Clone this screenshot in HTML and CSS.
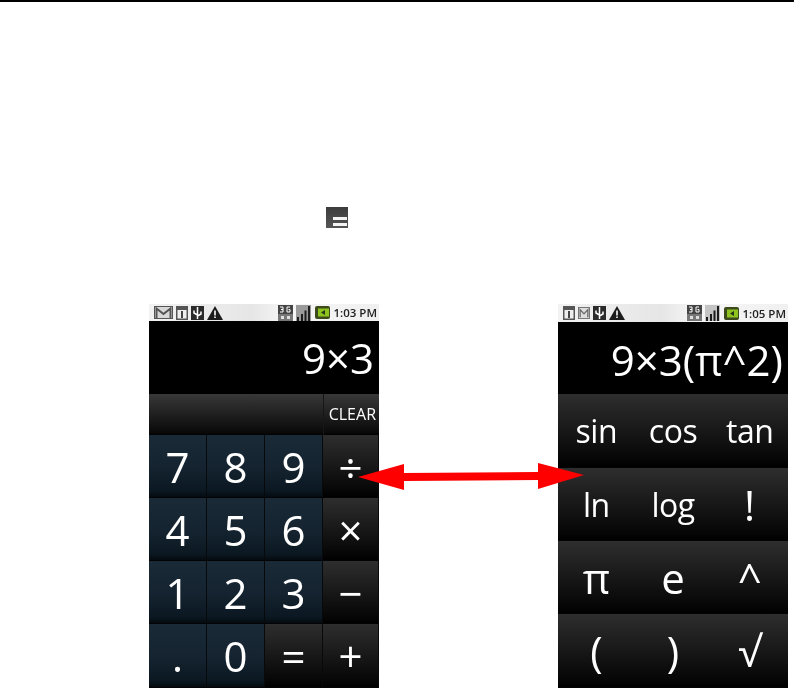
FILE: index.html
```html
<!DOCTYPE html>
<html lang="en">
<head>
    <meta charset="UTF-8">
    <meta name="viewport" content="width=device-width, initial-scale=1.0">
    <title>Calculator panels</title>
    <link rel="stylesheet" href="styles.css">
</head>
<body>
    <div class="top-rule"></div>

    <div class="menu-icon"><span></span><span></span></div>

    <div class="shots">
        <div class="phone">
            <div class="status">
                <div class="status-icons">
                    <svg class="ico ico-mail" viewBox="0 0 19 13"><rect x=".5" y=".5" width="18" height="12" fill="#d8d8d8" stroke="#555"/><path d="M2.500 12V2.500l7 5.500 7-5.500V12" fill="none" stroke="#555" stroke-width="2"/></svg>
                    <svg class="ico ico-cal" viewBox="0 0 12 14"><rect width="12" height="14" fill="#555"/><rect x="1.500" y="4" width="9" height="8.500" fill="#eee"/><path d="M5 5h2v7H5z" fill="#444"/></svg>
                    <svg class="ico ico-usb" viewBox="0 0 13 14"><rect width="13" height="14" fill="#2b2b2b"/><path d="M6.500 1v12M6.500 9 3 7V4.500M6.500 10 10 8V5.500" fill="none" stroke="#fff" stroke-width="1.500"/></svg>
                    <svg class="ico ico-warn" viewBox="0 0 16 14"><path d="M8 0 16 14H0z" fill="#1c1c1c"/><path d="M7.200 4.500h1.600v5H7.200zM7.200 10.500h1.600V12H7.200z" fill="#fff"/></svg>
                </div>
                <div class="status-icons">
                    <svg class="ico ico-net" viewBox="0 0 15 16"><rect width="15" height="9" fill="#444"/><rect y="9" width="15" height="7" fill="#777"/><path d="M2 2h3v5H2M5 4.500H3M12 2H9v5h3V4.500h-1.500" fill="none" stroke="#fff"/><path d="M3 11h3v3H3zM9 11h3v3H9z" fill="#ddd"/></svg>
                    <svg class="ico ico-net" viewBox="0 0 15 16"><rect width="15" height="16" fill="#9a9a9a"/><path d="M1 16v-4h2v4zM5 16V9h2v7zM8.500 16V5.500h2V16zM12 16V1h2v15z" fill="#1c1c1c"/></svg>
                    <svg class="ico ico-batt" viewBox="0 0 16 13"><rect x="1" y="0" width="15" height="13" rx="2" fill="#3c4a1c"/><rect x="4" y="2.500" width="11" height="8" fill="#8fc31f"/><path d="M11 4 7 6.500 11 9z" fill="#23351a"/></svg>
                    <span class="clock">1:03 PM</span>
                </div>
            </div>
            <div class="display">9×3</div>
            <div class="clear-row"><span class="clear-label">CLEAR</span></div>
            <div class="keypad">
                <div class="key blue">7</div>
                <div class="key blue">8</div>
                <div class="key blue">9</div>
                <div class="key dark op">÷</div>
                <div class="key blue">4</div>
                <div class="key blue">5</div>
                <div class="key blue">6</div>
                <div class="key dark op">×</div>
                <div class="key blue">1</div>
                <div class="key blue">2</div>
                <div class="key blue">3</div>
                <div class="key dark op">−</div>
                <div class="key blue">.</div>
                <div class="key blue">0</div>
                <div class="key dark op">=</div>
                <div class="key dark op">+</div>
            </div>
        </div>

        <div class="phone">
            <div class="status status-tall">
                <div class="status-icons">
                    <svg class="ico ico-cal" viewBox="0 0 12 14"><rect width="12" height="14" fill="#555"/><rect x="1.500" y="4" width="9" height="8.500" fill="#eee"/><path d="M5 5h2v7H5z" fill="#444"/></svg>
                    <svg class="ico ico-cal" viewBox="0 0 14 14"><rect x=".5" y=".5" width="13" height="13" fill="#ddd" stroke="#666"/><path d="M2.500 12V3l4.500 5 4.500-5v9" fill="none" stroke="#666" stroke-width="1.500"/></svg>
                    <svg class="ico ico-usb" viewBox="0 0 13 14"><rect width="13" height="14" fill="#2b2b2b"/><path d="M6.500 1v12M6.500 9 3 7V4.500M6.500 10 10 8V5.500" fill="none" stroke="#fff" stroke-width="1.500"/></svg>
                    <svg class="ico ico-warn" viewBox="0 0 16 14"><path d="M8 0 16 14H0z" fill="#1c1c1c"/><path d="M7.200 4.500h1.600v5H7.200zM7.200 10.500h1.600V12H7.200z" fill="#fff"/></svg>
                </div>
                <div class="status-icons">
                    <svg class="ico ico-net" viewBox="0 0 15 16"><rect width="15" height="9" fill="#444"/><rect y="9" width="15" height="7" fill="#777"/><path d="M2 2h3v5H2M5 4.500H3M12 2H9v5h3V4.500h-1.500" fill="none" stroke="#fff"/><path d="M3 11h3v3H3zM9 11h3v3H9z" fill="#ddd"/></svg>
                    <svg class="ico ico-net" viewBox="0 0 15 16"><rect width="15" height="16" fill="#c4c4c4"/><path d="M1 16v-4h2v4zM5 16V9h2v7zM8.500 16V5.500h2V16zM12 16V1h2v15z" fill="#1c1c1c"/></svg>
                    <svg class="ico ico-batt" viewBox="0 0 16 13"><rect x="1" y="0" width="15" height="13" rx="2" fill="#3c4a1c"/><rect x="4" y="2.500" width="11" height="8" fill="#8fc31f"/><path d="M11 4 7 6.500 11 9z" fill="#23351a"/></svg>
                    <span class="clock">1:05 PM</span>
                </div>
            </div>
            <div class="display display-low">9×3(π^2)</div>
            <div class="func-pad">
                <div class="key dark func">sin</div>
                <div class="key dark func">cos</div>
                <div class="key dark func">tan</div>
                <div class="key dark func">ln</div>
                <div class="key dark func">log</div>
                <div class="key dark func func-big">!</div>
                <div class="key dark func func-big">π</div>
                <div class="key dark func func-big">e</div>
                <div class="key dark func func-big">^</div>
                <div class="key dark func func-big">(</div>
                <div class="key dark func func-big">)</div>
                <div class="key dark func func-big">√</div>
            </div>
        </div>

        <!-- red double arrow sits over both phones -->
        <svg class="arrow" viewBox="0 0 240 40" width="240" height="40">
            <path d="M8 17 54 4V13L188 12V3L234 15 188 29V20L54 21V30Z" fill="#fe0000"/>
        </svg>
    </div>
</body>
</html>
```

FILE: styles.css
```css
* {
    margin: 0;
    padding: 0;
    box-sizing: border-box;
}

body {
    background: #fff;
    font-family: "Open Sans", "Noto Sans", sans-serif;
    height: 688px;
    overflow: hidden;
}

.top-rule {
    height: 2px;
    background: #000;
}

.menu-icon {
    width: 22px;
    height: 21px;
    margin: 205px 0 0 326px;
    padding: 10px 1px 2px 7px;
    background: linear-gradient(180deg, #3c3c3c 0%, #555 100%);
    display: flex;
    flex-direction: column;
    gap: 3px;
}

.menu-icon span {
    height: 3px;
    background: #f4f4f4;
}

.shots {
    position: relative;
    display: flex;
    gap: 179px;
    margin: 76px 0 0 149px;
}

.phone {
    width: 230px;
    height: 384px;
    display: flex;
    flex-direction: column;
    overflow: hidden;
    background: #000;
    color: #fff;
    filter: blur(0.4px);
}

.status {
    height: 17px;
    flex-shrink: 0;
    background: linear-gradient(90deg, #f2f2f2 0%, #e6e6e6 45%, #f6f6f6 60%, #f0f0f0 100%);
    display: flex;
    align-items: center;
    justify-content: space-between;
    padding: 0 2px 0 5px;
}

.status-tall {
    height: 18px;
}

.status-icons {
    display: flex;
    align-items: center;
    gap: 3px;
}

.ico {
    height: 14px;
}

.ico-mail {
    width: 19px;
    height: 13px;
}

.ico-cal {
    width: 12px;
}

.ico-usb {
    width: 13px;
}

.ico-warn {
    width: 16px;
}

.ico-net {
    width: 15px;
    height: 16px;
}

.ico-batt {
    width: 16px;
    height: 13px;
}

.clock {
    font-size: 11.5px;
    font-weight: 600;
    color: #222;
}

.display {
    height: 73px;
    flex-shrink: 0;
    background: #000;
    font-size: 42px;
    line-height: 73px;
    text-align: right;
    padding-right: 5px;
    white-space: nowrap;
}

.display-low {
    height: 72px;
    line-height: 76px;
}

.clear-row {
    height: 41px;
    flex-shrink: 0;
    display: flex;
    justify-content: flex-end;
    align-items: center;
    background: linear-gradient(180deg, #383838 0%, #1f1f1f 50%, #090909 95%, #000 100%);
}

.clear-label {
    width: 56px;
    height: 100%;
    border-left: 1px solid #161616;
    font-size: 16px;
    line-height: 41px;
    text-align: right;
    padding-right: 3px;
}

.keypad {
    display: grid;
    grid-template-columns: 58px 58px 58px 56px;
    grid-template-rows: 63px 63px 63px 64px;
    flex: 1;
}

.func-pad {
    display: grid;
    grid-template-columns: repeat(3, 1fr);
    grid-template-rows: 74px 73px 73px 74px;
    flex: 1;
}

.key {
    display: flex;
    align-items: center;
    justify-content: center;
    border-right: 1px solid #07090b;
    border-bottom: 1px solid #020304;
    font-size: 42px;
}

.blue {
    background: linear-gradient(180deg, #1a2a37 0%, #14232f 55%, #0b1822 90%, #050b10 100%);
}

.dark {
    background: linear-gradient(180deg, #2e2e2e 0%, #1a1a1a 45%, #060606 90%, #000 100%);
}

.op {
    font-size: 42px;
    font-weight: 500;
}

.func {
    font-size: 32px;
    letter-spacing: -0.5px;
    border-right: 0;
}

.func-big {
    font-size: 42px;
    font-weight: 500;
    letter-spacing: 0;
}

.arrow {
    position: absolute;
    left: 201px;
    top: 156px;
}
```
